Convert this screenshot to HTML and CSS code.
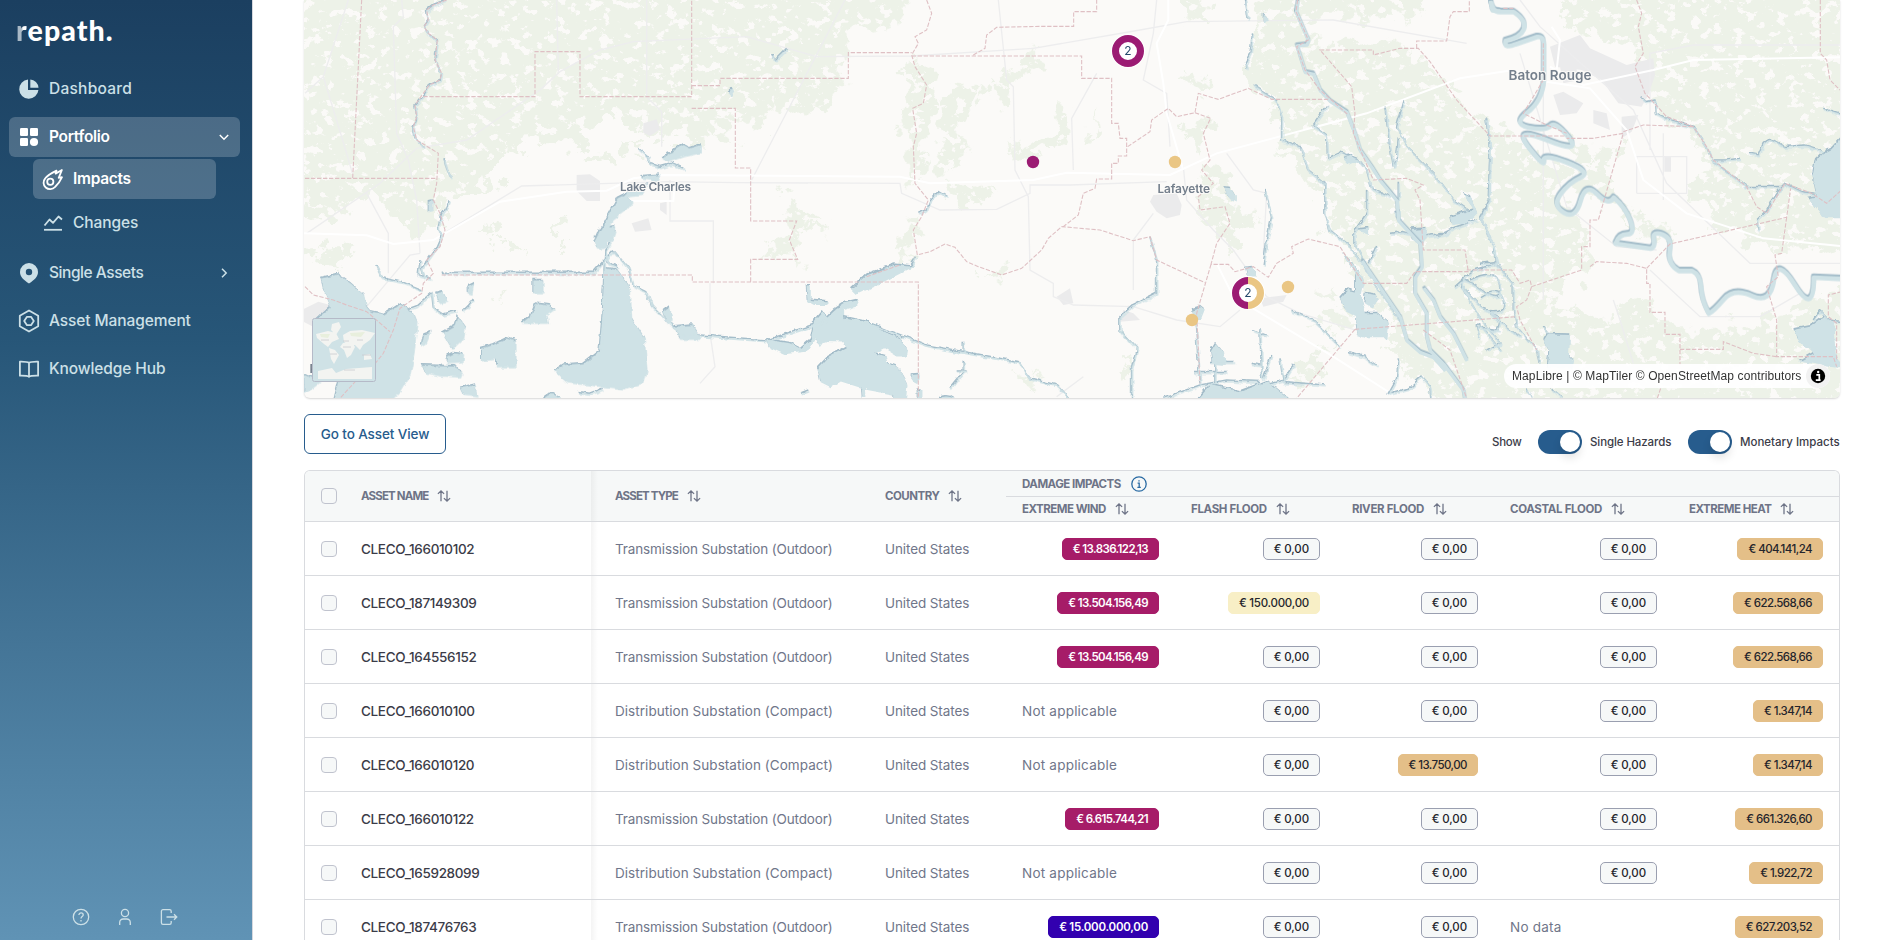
FILE: index.html
```html
<!DOCTYPE html>
<html lang="en">
<head>
<meta charset="utf-8">
<title>repath. – Portfolio Impacts</title>
<link rel="stylesheet" href="styles.css">
</head>
<body>
<svg width="0" height="0" class="defs">
  <symbol id="sort" viewBox="0 0 14 12"><path d="M4 11.2V1M.9 3.9 4 .9l3.1 3M10 .8V11M6.9 8.1l3.1 3 3.1-3" fill="none" stroke="currentColor" stroke-width="1.3"/></symbol>
</svg>
<div class="app">
<aside class="sidebar">
  <div class="logo"><span class="logo-r">r</span>epath.</div>
  <nav class="nav">
    <a class="item"><svg class="ico" viewBox="0 0 20 20"><path d="M9 .6V11h10.4A9.6 9.6 0 1 1 9 .6Z" fill="currentColor"/><path d="M11.3.5a9 9 0 0 1 8.2 8.2h-8.2Z" fill="currentColor"/></svg><span class="loose">Dashboard</span></a>
    <a class="item on"><svg class="ico" viewBox="0 0 20 20" fill="currentColor"><rect x="1" y="1" width="8" height="8" rx="1.3"/><rect x="11" y="1" width="8" height="8" rx="1.3"/><rect x="1" y="11" width="8" height="8" rx="1.3"/><circle cx="15" cy="15" r="4.1"/></svg><span>Portfolio</span><svg class="chev" viewBox="0 0 10 10"><path d="m.8 3 4.2 4.2L9.200 3"/></svg></a>
    <a class="item sub on first"><svg class="ico line" viewBox="0 0 20 20"><path d="M18.900 1 12.600 4.600 13.500 1.600C9 3.800 4.500 6.500 2.200 9.300A6.500 6.500 0 0 0 12 18c3-2.500 5.300-6 7-9.800l-3.300.7Z"/><circle cx="7.300" cy="12.700" r="3.100"/></svg><span>Impacts</span></a>
    <a class="item sub"><svg class="ico line" viewBox="0 0 20 20"><path d="M1.500 12.500 6.500 6.500l3.500 3.300L15.500 3.500l3.500 3"/><path d="M1 16.800h18"/></svg><span>Changes</span></a>
    <a class="item after"><svg class="ico" viewBox="0 0 20 20"><path fill="currentColor" fill-rule="evenodd" d="M10 0a9 9 0 0 1 9 9c0 4.600-3.500 8-9 11.500C4.500 17 1 13.600 1 9a9 9 0 0 1 9-9Zm0 5.800a3.200 3.200 0 1 0 0 6.400 3.200 3.200 0 0 0 0-6.400Z"/></svg><span class="snug">Single Assets</span><svg class="chev" viewBox="0 0 10 10"><path d="M3 .8 7.200 5 3 9.200"/></svg></a>
    <a class="item"><svg class="ico line" viewBox="0 0 20 20"><path d="m10-.5 9.200 5.200v10.600L10 20.500.8 15.300V4.700Z"/><path d="m8 5.800h4l2.800 4.200-2.800 4.200H8L5.200 10Z" stroke-linejoin="round"/></svg><span>Asset Management</span></a>
    <a class="item"><svg class="ico line" viewBox="0 0 20 20"><path d="M10 4C8.500 2.700 6 2.600.9 2.700v14C6 16.600 8.500 16.600 10 17.800c1.500-1.200 4-1.200 9.100-1.100v-14C14 2.600 11.500 2.700 10 4Zm0 0v13.500"/></svg><span>Knowledge Hub</span></a>
  </nav>
  <div class="foot">
    <svg viewBox="0 0 18 18"><circle cx="9" cy="9" r="7.700"/><path d="M6.900 7.100c0-3 4.300-2.800 4.300-.2 0 1.600-2.200 1.700-2.200 3.500M9 12v1.400"/></svg>
    <svg viewBox="0 0 18 18"><circle cx="9" cy="5" r="3.600"/><path d="M3.700 17v-2.500a3.500 3.500 0 0 1 3.500-3.500h3.600a3.500 3.500 0 0 1 3.500 3.500V17"/></svg>
    <svg viewBox="0 0 18 18"><path d="M11.200 5V3.300c0-1-.6-1.600-1.600-1.600H3C2 1.700 1.400 2.300 1.400 3.300v11.400c0 1 .6 1.600 1.600 1.600h6.600c1 0 1.600-.6 1.600-1.600V13M6.500 9h10.300M14 6.200 16.800 9 14 11.800"/></svg>
  </div>
</aside>
<main class="main">
<section class="map">
<svg class="canvas" viewBox="304 0 1536 398" width="1536" height="398">
<defs>
  <filter id="woods" x="304" y="0" width="1536" height="400" filterUnits="userSpaceOnUse" color-interpolation-filters="sRGB">
    <feTurbulence type="fractalNoise" baseFrequency=".05" numOctaves="5" seed="8" result="n"/>
    <feDisplacementMap in="SourceGraphic" in2="n" scale="44" xChannelSelector="R" yChannelSelector="G" result="d"/>
    <feTurbulence type="fractalNoise" baseFrequency=".09 .11" numOctaves="5" seed="21"/>
    <feColorMatrix values="0 0 0 0 1  0 0 0 0 1  0 0 0 0 1  20 0 0 0 -7.300" result="m"/>
    <feComposite in="d" in2="m" operator="in"/>
  </filter>
  <filter id="rough" x="304" y="0" width="1536" height="400" filterUnits="userSpaceOnUse">
    <feTurbulence type="fractalNoise" baseFrequency=".12" numOctaves="3" seed="3" result="n"/>
    <feDisplacementMap in="SourceGraphic" in2="n" scale="5" xChannelSelector="R" yChannelSelector="G"/>
  </filter>
  <g id="lakes">
    <g transform="scale(.33333)">
      <g transform="translate(900)">
        <path d="M60 830 110 818 150 845 190 880 197 915 210 930 250 938 300 905 340 935 350 960 342 1050 330 1120 300 1170 270 1200H100L120 1120 60 1140 10 1120V1180L90 1120 40 960 90 915 70 870Z"/>
        <path d="M912 800 950 805 990 860 994 950 1032 1010 1040 1110 1030 1145 970 1163 890 1155 800 1145 760 1110 790 1090 850 1085 895 1050 905 940Z"/>
        <path d="M697 836h31v42h-31zM705 907 745 912 763 925 740 940 745 967H663L690 945ZM500 855l20-10-5 35-15-5ZM405 875l20-5 15 30-25 5ZM425 995 460 975 470 945 495 980 490 1010 455 1045ZM440 1065 460 1055 490 1058 488 1085 440 1088ZM365 1092 460 1095 488 1110 480 1128 420 1125 375 1115ZM540 1040 580 1030 620 1010 647 1020V1097H585V1075L540 1080ZM370 1000l22-8-15 35-15 8ZM480 1160l45-10 5 35-40-5ZM725 1195q30-35 58 0ZM1088 930l20-15 8 45-15 8ZM1120 975l55-5 25 35v10h-65ZM383 600l15-3v30l-15 5ZM950 590l30-15 15 30-20 25-40 30-25 45v35l-20 5-10-20 15-35 15-25ZM883 710l30-2 5 30-15 5ZM905 680l38-5-2 45-40 5ZM1100 455l15-5 30-20 20 10 35-10v25l-50 12-45 15-20-5ZM985 560l60-10-20 30-50 5ZM1020 525l60-5-10 20-40-5Z"/>
      </g>
      <g transform="translate(2100)">
        <path d="M450 865 500 820 580 790 630 795 650 765 640 795 590 820 520 855 465 880ZM317 855h13v40l50 5v10h-40l-20-10ZM200 1015 270 1025 300 1040 330 1015 340 960 365 930 380 945 400 925 430 905 475 895 465 915 430 925 430 950 500 962 560 995 600 1010 620 1040 615 1065 590 1065 550 1040 520 1055 555 1065 560 1085 590 1095 610 1130 620 1150 615 1200H580V1180L500 1165 420 1140 390 1160 360 1145 352 1100 380 1070 435 1040 425 1020 375 1018 360 1040 345 1010 320 1050 250 1058 210 1040ZM635 1120l20-2-5 30-15-8ZM480 1160h12l2 25-12 5ZM650 1165h12v30h-12ZM710 1195q28-20 55 0ZM80 275l15-15 5 10-10 15Z"/>
      </g>
      <g transform="translate(3300)">
        <path d="M370 558 390 560 405 585V600L385 590ZM435 800 455 797 467 825H440ZM275 925l25-8 12 10-10 25h-20ZM725 755 760 790 790 840 780 880 795 935 830 935 865 965 860 1010 800 1010 770 1000 765 945 735 930 718 890 740 865 765 870 765 820ZM795 875l30 5 10 20-20 18-25-15ZM728 470l20-10 25 20-25 10ZM765 685l40-5v20ZM880 630l20-5v35l-15-5ZM930 685l50-3-5 30-15 20-25-15ZM1050 645l70-20-35-50 25 10 20 50-30 30-45 5ZM285 1200 330 1150 420 1170 500 1140 570 1200ZM330 1050l15-25 25 30 5 35-40-5ZM485 37l20 20-20 5Z"/>
      </g>
      <g transform="translate(4440)">
        <path d="M190 1015 200 998 268 1000 265 1060 280 1075 275 1100H200L205 1050ZM940 985 990 975 1030 945 1060 960 1068 1060 1080 1100 1040 1095 955 1080 1000 1055 985 1040 950 1020ZM1025 455 1055 440 1100 390V650L1030 650 985 590 1008 585 996 520 1005 475Z"/>
      </g>
    </g>
  </g>
  <g id="creeks" fill="none" stroke="currentColor" stroke-linejoin="round">
    <g transform="scale(.33333)" stroke-width="5">
      <g transform="translate(900)"><path d="M440 0 400 15 380 30 385 60 372 80 385 100 412 120 405 180 425 220 420 240 388 255 375 280 345 315 350 350 340 380 345 410 370 440M432 475l8 30 14 30M445 600l-10 30-15 20-5 35 10 20-15 35-25 35-20 30 10 30M230 795l15 35 60 15 60 25M425 817H880L940 750l45 55 15 50 40 20 15 40 80 80 50 10M915 750l-5 120-5 150-10 45M310 932l40-15 45-40 5 45 30 20 40-10M490 932l15-15 15-20M360 780l-5 45 40 10M1015 445l30 25 5 20 30 10 35-10 35 15M838 1175l30 5 40-15M945 690l-10 30-20 30 10 40 30 10"/></g>
      <g transform="translate(2100)"><path d="M0 1005 200 1020 380 960M430 950 500 965 680 1035 955 1085 990 1135 1070 1155 1105 1195M790 1025v30M750 1165 790 1115V1085M770 1110h30M215 165l10 15 35-35M655 640l25-10 10-30 25-25 25 15M300 1180l25-10"/></g>
      <g transform="translate(3300)"><path d="M437 0 445 60M458 100 450 160 437 185 442 205M460 255 530 300 545 350V420L600 440 625 510 675 550V640L690 690 750 740 785 790 900 960M683 315 640 375 680 405 683 475 720 457 770 475 800 510 815 565 870 590M855 320 870 440 880 500M913 300 890 380 930 450 1000 520 1060 600 1120 640M1160 355 1170 450 1165 600 1145 650 1180 740 1187 790 1120 810 1065 860M495 570 515 650 500 720 490 795M150 710 170 780 170 880 100 915 60 950 60 990 110 1045 95 1100V1195M190 1195 300 1155 380 1140 480 1145M285 960 290 1020 300 1150M345 1040V1150M280 1115h100M330 1085h70M480 985l5 150M460 990l40 15M455 1090l25 5M515 1065l-25 70M580 1095l-30 45-70 20M540 1075l10 70M550 1145l125 10M575 930 640 960 720 1040M745 1055l50 15 35 25M895 1075l-5 60-25 45 60-15 40-35 25 30 5 60M800 570V640L765 690V730L830 860M830 735l-25 55M870 700l40-5 50 15 70-10 40-20 60-20M895 545V600M895 415 890 470 880 500M1085 860l60 60 55 35M1130 980l70 10M1110 840q80-40 90 20t-70 0-10 60 80 40M1140 1010q-30-70 20-10t40 50"/></g>
      <g transform="translate(4440)"><path d="M18 355 30 450 28 600 0 650 40 740 50 790 100 850 100 930 110 980 170 1050 178 1090M0 790 50 785M810 460l25 5 15-35 20-15 45 25 60-5 50 15M700 485l100 75H905L915 550 965 575 1005 580M905 560l-30 40-15 30-30 30 5 30M1030 325l25 10 25 8M485 290l15 15 25-5 5 40 40 20 70 20 40 60 15 40 45 0 40-5M0 890q60-40 70 10t-60 30M30 940l90 70M20 980l40 50-40 20M1000 960l20-30 30 30 35 5M190 980l12 15M140 1165l15 30M215 1165l35 30"/></g>
    </g>
  </g>
  <g id="rivers" fill="none" stroke="currentColor" stroke-linejoin="round">
    <g transform="scale(.33333)">
      <g transform="translate(4440)" stroke-width="14"><path d="M32 0Q35 35 60 33H100Q140 60 130 85T75 120Q70 145 105 130L170 108Q190 105 190 130V240Q185 300 140 335T145 380T210 375T265 410T200 418T145 440T190 480T260 485T300 530T240 580T250 635T300 600T350 580T400 590Q435 620 450 660T440 700T405 728L510 743Q525 740 520 715T545 700T568 750T595 810H635Q660 820 662 860T685 938Q700 930 730 895T815 885T880 838T945 855T1000 830L1085 834"/></g>
      <g transform="translate(3300)" stroke-width="10"><path d="M593 0 588 35 625 120 620 132 590 135 615 215 640 220 660 270 690 302 740 335 765 400 780 450 815 500 840 540 890 600 895 660 960 730 965 800 945 830 945 880 980 940 980 1010 990 1050 1030 1090 1090 1170 1095 1200M785 780 900 950 920 1020 960 1055 1000 1070 1035 1110M970 862 1000 900 1020 950 1060 1000 1100 1080M1170 0l5 30 25 0"/></g>
    </g>
  </g>
</defs>
<g filter="url(#woods)" class="woods"><g transform="scale(.33333)">
  <g transform="translate(900 0)">
    <path d="M-150-150H1250V400L1080 420 960 340 860 400 880 440 720 420 600 470 600 540 470 590 440 660 420 600 400 700 330 700 200 560 150 640-100 680Z"/>
    <path d="M10 745l110-10 10 60-50-25-60 20ZM560 670l50 10-10 35-25-5ZM615 705l50 40-20 15-30-20ZM780 650l20 10-5 85-15-5ZM970 420h60v45h-50ZM860 470l50-10 20 30-60 5ZM590 880l30 5-20 15Z"/>
  </g>
  <g transform="translate(2100 0)">
    <path d="M-50-100H640L620 60 440 100 440 220 400 290 340 330 200 310 190 380 60 340 100 420-50 440ZM620 170l50 20 35 50-5 70-30 40-10 200-40-10-10-200 20-40ZM710 310l60-50 40 10-20 190-50 70-40-20 30-60ZM820 280l60-20 80-70 60-30 10 30-70 40-60 70-60 20ZM250 570l35 60 90 10-50 30 60 30-90-10-5 130-25-60-90 20 40-70 50-10ZM590 720l60-90v140l-50 15ZM730 560l140 20-30 40h-60ZM1070 310l40 10-10 120-100 40-60 10 10-40 110-40ZM950 410l30 80-30-10ZM820 800l70 10 20 30-80-20ZM930 1100l80 10 10 60-70-40ZM1150 400l30-60 10 60-30 60Z"/>
  </g>
  <g transform="translate(3300 0)">
    <path d="M450 80 540-100H1000L980 40 600 60 620 120 940 140 1040 240 1060 280 1170 380V1250H1100L900 1100 860 950 780 860 720 740 690 700 680 600 620 520 560 470 540 400 520 300 440 250ZM240 0h90l-20 80-70-30ZM220 210l120 50-40 20ZM260 350l70 20-20 90-50-30ZM310 500l60 20 40 90 80 40-70 40-20 80-50-80-60-40ZM60 1090l60 10-10 40-40 5ZM620 960l70-40 70 40-50 30ZM650 870h80v50ZM560 1150l60-90 80-30-30 60-60 90Z"/>
  </g>
  <g transform="translate(4440 0)">
    <path d="M200-100H1250V760L850 740 700 660 620 560 690 480 600 380 490 290 470 180 400 120 280 90ZM-20 370 130 400 160 480 290 500 230 600 330 680 320 800 200 900 380 960 480 880 520 940 600 1000 800 980 1000 900 1150 850V1250H-50ZM290 430l120 0-20 120 60 100 90 20 20 70-80-20-60-100-120-40Z"/>
  </g>
</g></g>
<g transform="scale(.33333)" class="urban">
  <path d="M905 930l50-25 35 10-5 40-45 25-40-20ZM1730 525l40-2 30 20v60h-40l-30-30ZM1895 670l50-15 10 35-50 5ZM1930 370l40-12 10 30-30 20-20-10ZM1980 610l20-5v40l-20-15ZM3460 585l70-5 15 35-5 30-40 10-30-20-20-30ZM3170 890l40-25 10 45-30 5ZM3370 930l30 10 20 20-60 5ZM3780 895l80-10-10 20-60 15ZM4650 140l90-35 30 40 110 50 80-20 5 50-20 60-20 35-70-10-50-70-60-30-80-10ZM4660 285l30-10 60 35-20 30-50 5ZM4780 330l40 10 10 50-50-20ZM4865 350l50-5-20 50-30 20ZM4993 470h20v45h-20ZM4680 200l40-20 20 60-50 10Z"/>
</g>
<g transform="scale(.33333)" class="roads">
  <path d="M1045 0 970 230 1040 460 1060 530M915 280 970 230M1205 0 1210 50 1180 80 1190 400 1225 480 1250 600 1260 760M920 700 1140 550 1250 445 1400 420 1620 270 1680 215 1800 150 1900 125 2240 110 2450 170 2735 168 3100 145 3420 90 3560 65 4000 60 4400 130M1100 580 1165 700 1165 820M1100 920 1230 765 1260 760M1340 695 1565 558 2000 545 2210 548 2700 550 2705 580 2820 630 2990 628 3090 580V555H3210L3500 545M1940 0V290L1985 335V440M1670 0 1675 215M2010 540V663H2140V850M2535 0 2255 540M2995 0 3020 240 3040 260 3045 510 3085 590 3090 810 3160 850V890L3220 915 3400 920 3530 960 3660 980 3720 930M3290 220 3215 355 3220 510M3470 0 3460 100 3430 240 3500 280 3510 440M3550 500 3560 600 3640 690 3700 750 3800 890 3900 940 4100 1000M3400 720 3460 640M3400 720V870M3680 460 3760 570 3800 580 3790 760M4560 0 4620 80 4900 330 5000 550 5250 790 5520 790M4560 160 4700 620 4850 740 4970 750M4630 130V900M4910 580H5060V470H4910V580M4990 600V400M4950 450V160L5080 135H5520M4840 900 4860 960 4900 1090M4950 810 5100 950 5280 950 5400 880M2130 850V1000L2145 1100 2100 1150M3170 1190 3250 1130"/>
</g>
<g transform="scale(.33333)" class="motorway">
  <path d="M912 700 1100 706 1180 732 1300 720 1500 605 1700 575 1820 572 1900 535 1990 525 2700 530 2790 550 3100 540 3200 518 3510 525 3650 460 4100 340 4380 235 4540 210 4640 245 4770 265 4880 390 4930 540 5060 640 5290 715 5520 738M3505 0V60L3470 130 3490 250 3500 340 3550 510M3650 790 3700 890 3850 980 4000 1070 4180 1185M4650 200 4750 255 4960 210 5080 180 5520 172M4655 80 4680 120 4670 210M1860 570 1885 603H2020L2023 560"/>
</g>
<g filter="url(#rough)">
  <g class="wd"><use href="#lakes"/><use href="#creeks"/></g>
  <g class="wl" transform="translate(.8 1.600)"><use href="#lakes"/><use href="#creeks"/></g>
</g>
<g class="wd" transform="translate(0 -1)"><use href="#rivers"/></g>
<g class="wl" transform="translate(.5 1)"><use href="#rivers"/></g>
<g transform="scale(.33333)" class="bounds">
  <path d="M1085 0 1058 535M915 535H1310M1270 290H1605V155H1740V290H2075V0M2075 257H2160V235H2545V158H2735M2075 325H2206V504H2252V663H2390L2368 720 2393 778H2252V846M1325 825H2077V846H2755V1195M1340 0 1300 15 1280 30 1285 60 1272 80 1285 100 1312 120 1305 180 1325 220 1320 240 1288 255 1245 315 1250 350 1240 380 1250 420 1315 460 1310 550 1300 600 1320 640 1335 690 1320 740 1280 780 1300 820 1270 850 1265 880 1200 925 1180 990 1150 1060 1110 1110 1070 1140 1020 1195M915 860 940 885 1000 900 1040 915 1100 935 1170 995"/>
  <path d="M2780 0 2795 40 2780 90 2745 110 2755 130 2735 165 2745 200 2780 255 2770 310 2738 325 2750 400 2740 440 2745 550 2785 600 2765 650 2740 690 2752 765 2790 755 2835 732 2865 742 2900 785 2935 800 3005 825 3065 805 3125 750 3145 715 3185 680 3300 690 3400 722 3450 710 3470 780 3615 848M2735 168H3245V235H3335V370H3355L3360 415H3380V468H3355V490H3335V537H3290L3285 565 3250 580 3235 645 3190 680M2920 165 2955 145 2960 105 2990 82 3120 79H3221V35H3290V0M2600 830 2700 795"/>
  <path d="M3383 440 3450 395 3455 360 3505 325 3530 350 3585 338 3595 280 3655 298 3745 265 3815 298H3985M3585 338 3632 355 3610 400 3630 480 3605 510 3640 550 3595 590 3600 630 3675 620 3690 670 3650 730 3633 793H3685L3705 815 3760 800 3805 832 3830 790 3880 760 3875 740 3925 717 4020 740 4090 850H4220L4245 815H4405L4395 750H4270L4260 600 4245 570 4270 555 4220 535 4120 540 4060 400 4065 340 4055 260 3960 150H4120V165L4200 145H4255L4290 185 4370 300 4470 408H4700M3893 0 3888 35 3925 120 3890 140 3915 210 3960 270 4000 305 4045 345M4250 145V123H4340L4350 50 4360 35H4408V0M3633 793 3590 940 3600 1150M4065 988 4550 950M4065 988 3890 1195M4270 990 4350 1050 4400 1195M4400 810H4535L4560 850 4590 840 4595 860 4745 810V740H4770V660H4795L4870 400 4780 415 4700 415M4595 860 4580 900 4550 920 4560 960 4610 1050"/>
  <path d="M4910 0 4925 40 4915 80 4930 160 4905 200 4935 280 5000 350 5080 380 5120 440 5140 480 5240 560 5270 620 5300 640 5330 590 5355 550 5435 580 5480 610 5525 570M4870 395 4930 375 5080 380M5461 0V160L5480 180 5490 240 5520 270M4940 805 5010 732 5360 652 5372 565M5360 652 5345 760 5325 765 5335 830 5300 860 5330 960V1070H5500L5510 1100M4770 800 4790 785 4880 790 4940 805V850H4950V937H4995V1003H5040V1095M5040 1048H5170V1025L5260 1060 5330 1070M5525 875 5485 885V950L5510 970V1080M4972 1195l10-30M4510 25H4540M4630 130V240L4570 340 4640 375 4700 400"/>
</g>
<g class="labels">
  <text x="309.500" y="373">P</text>
  <text x="620" y="190.500" textLength="71">Lake Charles</text>
  <text x="1157.500" y="193" textLength="52.500">Lafayette</text>
  <text x="1508.500" y="80" textLength="83" class="big">Baton Rouge</text>
</g>
<g class="pins">
  <circle cx="1033" cy="162" r="6.200" fill="#9b1b73"/>
  <g fill="#eac684"><circle cx="1175" cy="162" r="6.200"/><circle cx="1288" cy="287" r="6.200"/><circle cx="1192" cy="320" r="6.200"/></g>
  <circle cx="1128" cy="51" r="17" fill="#fff"/><circle cx="1128" cy="51" r="12.500" fill="none" stroke="#9b1b73" stroke-width="7"/>
  <circle cx="1248" cy="293" r="17" fill="#fff"/><path d="M1248 280.500a12.500 12.500 0 0 0 0 25" fill="none" stroke="#9b1b73" stroke-width="7"/><path d="M1248 280.500a12.500 12.500 0 0 1 0 25" fill="none" stroke="#eac684" stroke-width="7"/>
  <text x="1128" y="55">2</text><text x="1248" y="297">2</text>
</g>
<g transform="translate(312 318)">
  <rect x=".5" y=".5" width="63" height="63" rx="2" fill="#cfe2e6" stroke="#b5bac8"/>
  <g fill="#f3f4f1"><path d="M4 16 16 13 24 15 27 21 20 24 16 29 12 26 5 20ZM20 6l7-2 2 5-5 8-5-5ZM17 30l6 2 4 5-5 9-3-5ZM31 25l9-1 3 5-4 8-4 3-3-8-4-3ZM31 17l7-4 12-1 13 3-5 7-7 5-3 5-5-5-8-1-3-2ZM52 37l6-1 2 5-8 1ZM6 53 20 50 24 55 34 51 60 49V61H6Z"/></g>
  <g fill="#e8efdd"><path d="M8 16h10l-2 4-7-1ZM38 15l15-1-4 5-10-1Z"/></g>
  <path d="M9 22h8M31 23h6M45 22h6M31 29h8M18 36h7M50 37h9M32 52h11" stroke="#c9cbd0" stroke-width=".8"/>
</g>
</svg>
<div class="attrib"><span>MapLibre | © MapTiler © OpenStreetMap contributors</span><i><svg viewBox="0 0 24 24"><circle cx="12" cy="12" r="7.200"/><path d="M10.300 10.800h3v5M9.800 16.200h4.800" stroke="#fff" stroke-width="1.700"/><circle cx="12.200" cy="8" r="1.200" fill="#fff"/></svg></i></div>
</section>
<div class="bar">
  <button class="view">Go to Asset View</button>
  <div class="switches"><span class="l-show">Show</span><i class="sw"></i><span class="l-haz">Single Hazards</span><i class="sw"></i><span class="l-mon">Monetary Impacts</span></div>
</div>
<section class="table">
  <div class="head">
    <div class="c-name"><i class="box"></i><b class="tight">ASSET NAME</b><svg class="sort"><use href="#sort"/></svg></div>
    <div class="c-type"><b class="tight">ASSET TYPE</b><svg class="sort"><use href="#sort"/></svg></div>
    <div class="c-land"><b>COUNTRY</b><svg class="sort"><use href="#sort"/></svg></div>
    <div class="group">
      <div class="gtop"><b>DAMAGE IMPACTS</b><svg class="info" viewBox="0 0 16 16"><circle cx="8" cy="8" r="7.200"/><path d="M6.600 7.200h1.600v4M6.400 11.300h3.400M8 4.300v1.300"/></svg></div>
      <div class="gsub">
        <div><b>EXTREME WIND</b><svg class="sort"><use href="#sort"/></svg></div>
        <div><b class="open">FLASH FLOOD</b><svg class="sort"><use href="#sort"/></svg></div>
        <div><b class="open">RIVER FLOOD</b><svg class="sort"><use href="#sort"/></svg></div>
        <div><b class="open">COASTAL FLOOD</b><svg class="sort"><use href="#sort"/></svg></div>
        <div><b>EXTREME HEAT</b><svg class="sort"><use href="#sort"/></svg></div>
      </div>
    </div>
  </div>
  <div class="row"><div class="c-name"><i class="box"></i><span>CLECO_166010102</span></div><div class="c-type">Transmission Substation (Outdoor)</div><div class="c-land">United States</div><div class="v"><em class="high">€ 13.836.122,13</em></div><div class="v"><em>€ 0,00</em></div><div class="v"><em>€ 0,00</em></div><div class="v"><em>€ 0,00</em></div><div class="v"><em class="mid">€ 404.141,24</em></div></div>
  <div class="row"><div class="c-name"><i class="box"></i><span>CLECO_187149309</span></div><div class="c-type">Transmission Substation (Outdoor)</div><div class="c-land">United States</div><div class="v"><em class="high">€ 13.504.156,49</em></div><div class="v"><em class="low">€ 150.000,00</em></div><div class="v"><em>€ 0,00</em></div><div class="v"><em>€ 0,00</em></div><div class="v"><em class="mid">€ 622.568,66</em></div></div>
  <div class="row"><div class="c-name"><i class="box"></i><span>CLECO_164556152</span></div><div class="c-type">Transmission Substation (Outdoor)</div><div class="c-land">United States</div><div class="v"><em class="high">€ 13.504.156,49</em></div><div class="v"><em>€ 0,00</em></div><div class="v"><em>€ 0,00</em></div><div class="v"><em>€ 0,00</em></div><div class="v"><em class="mid">€ 622.568,66</em></div></div>
  <div class="row"><div class="c-name"><i class="box"></i><span>CLECO_166010100</span></div><div class="c-type dist">Distribution Substation (Compact)</div><div class="c-land">United States</div><div class="v na">Not applicable</div><div class="v"><em>€ 0,00</em></div><div class="v"><em>€ 0,00</em></div><div class="v"><em>€ 0,00</em></div><div class="v"><em class="mid">€ 1.347,14</em></div></div>
  <div class="row"><div class="c-name"><i class="box"></i><span>CLECO_166010120</span></div><div class="c-type dist">Distribution Substation (Compact)</div><div class="c-land">United States</div><div class="v na">Not applicable</div><div class="v"><em>€ 0,00</em></div><div class="v"><em class="mid">€ 13.750,00</em></div><div class="v"><em>€ 0,00</em></div><div class="v"><em class="mid">€ 1.347,14</em></div></div>
  <div class="row"><div class="c-name"><i class="box"></i><span>CLECO_166010122</span></div><div class="c-type">Transmission Substation (Outdoor)</div><div class="c-land">United States</div><div class="v"><em class="high">€ 6.615.744,21</em></div><div class="v"><em>€ 0,00</em></div><div class="v"><em>€ 0,00</em></div><div class="v"><em>€ 0,00</em></div><div class="v"><em class="mid">€ 661.326,60</em></div></div>
  <div class="row"><div class="c-name"><i class="box"></i><span>CLECO_165928099</span></div><div class="c-type dist">Distribution Substation (Compact)</div><div class="c-land">United States</div><div class="v na">Not applicable</div><div class="v"><em>€ 0,00</em></div><div class="v"><em>€ 0,00</em></div><div class="v"><em>€ 0,00</em></div><div class="v"><em class="mid">€ 1.922,72</em></div></div>
  <div class="row"><div class="c-name"><i class="box"></i><span>CLECO_187476763</span></div><div class="c-type">Transmission Substation (Outdoor)</div><div class="c-land">United States</div><div class="v"><em class="max">€ 15.000.000,00</em></div><div class="v"><em>€ 0,00</em></div><div class="v"><em>€ 0,00</em></div><div class="v na">No data</div><div class="v"><em class="mid">€ 627.203,52</em></div></div>
</section>
</main>
</div>
</body>
</html>
```
FILE: styles.css
```css
* { box-sizing: border-box; }
html, body { margin: 0; height: 100%; overflow: hidden; }
body { font-family: Inter, "Liberation Sans", sans-serif; background: #fff; color: #3b3c48; }
.defs { position: absolute; }
.app { display: flex; height: 940px; overflow: hidden; }

.sidebar { width: 253px; flex: none; display: flex; flex-direction: column; border-right: 1px solid #d6d8de; background: linear-gradient(#1b3f60, #275678 36%, #6093b5); color: #cce0e7; }
.logo { height: 69px; padding: 12px 0 0 16px; font: 900 28.500px/36px Lato, Inter, sans-serif; letter-spacing: 1.100px; color: #fff; }
.logo-r { background: linear-gradient(90deg, #a9b9c6 45%, #fff 60%); -webkit-background-clip: text; background-clip: text; color: transparent; }
.nav { display: flex; flex-direction: column; gap: 8px; padding: 0 12px 0 9px; }
.item { display: flex; align-items: center; height: 40px; border-radius: 6px; padding: 0 11px 0 10px; gap: 10px; font-size: 15.500px; font-weight: 500; letter-spacing: -.1px; }
.item span { padding-bottom: 1px; }
.item.on { background: rgba(255,255,255,.2); color: #fff; font-weight: 600; letter-spacing: -.3px; }
.item .loose { letter-spacing: .25px; }
.item .snug { letter-spacing: -.45px; }
.item.sub { margin: -4px 24px 0; }
.item.sub.first { margin-top: -6px; margin-bottom: 0; }
.item.sub.first + .sub { margin-top: -4px; }
.item.after { margin-top: 2px; }
.ico { width: 20px; height: 20px; overflow: visible; flex: none; }
.ico.line { fill: none; stroke: currentColor; stroke-width: 1.800; stroke-linejoin: round; }
.chev { width: 10px; height: 10px; margin-left: auto; fill: none; stroke: currentColor; stroke-width: 1.500; }
.foot { margin-top: auto; display: flex; gap: 26px; padding: 0 0 14px 72px; }
.foot svg { width: 18px; height: 18px; fill: none; stroke: #cce0e7; stroke-width: 1.300; }

.main { flex: 1; padding: 0 42px 0 51px; }
.map { position: relative; width: 1536px; height: 398px; border-radius: 0 0 6px 6px; overflow: hidden; background: #fbfaf8; box-shadow: 0 1px 2px rgba(0,0,0,.16); }
.canvas { display: block; }
.woods { fill: #edf2e8; }
.urban { fill: #ebebec; }
.roads { fill: none; stroke: #ededee; stroke-width: 4; }
.motorway { fill: none; stroke: #fff; stroke-width: 6; }
.wd { color: #a3bcc9; fill: #a3bcc9; }
.wl { color: #cfe2e6; fill: #cfe2e6; }
.bounds { fill: none; stroke: #dfc0c4; stroke-width: 3.300; stroke-dasharray: 13 5; }
.labels { font-size: 12px; font-weight: 600; fill: #747f8c; stroke: #fbfaf8; stroke-width: 2px; paint-order: stroke; }
.labels .big { font-size: 13.500px; }
.pins { font-size: 12px; text-anchor: middle; }
.pins text { fill: #24496a; }
.attrib { position: absolute; right: 10px; bottom: 10px; display: flex; height: 24px; width: 326px; border-radius: 12px; background: rgba(255,255,255,.93); font: 12px/24px "Liberation Sans", sans-serif; letter-spacing: .1px; color: #333; padding-left: 8px; justify-content: space-between; white-space: nowrap; }
.attrib i { width: 24px; height: 24px; border-radius: 50%; background: #f2f2f2; }
.attrib svg { display: block; }

.bar { display: flex; justify-content: space-between; align-items: flex-end; padding-top: 16px; height: 56px; }
.view { width: 142px; height: 40px; padding: 0; border: 1px solid #275c8d; border-radius: 6px; background: #fff; color: #275c8d; font: 500 13.500px Inter, sans-serif; letter-spacing: -.1px; white-space: nowrap; }
.switches { display: flex; align-items: center; height: 24px; font-size: 11.500px; font-weight: 500; color: #3b3c48; white-space: nowrap; }
.l-show { margin-right: 16px; width: 30px; letter-spacing: -.3px; }
.l-haz { margin: 0 16px 0 8px; width: 82px; letter-spacing: -.1px; }
.l-mon { margin-left: 8px; width: 100px; }
.sw { width: 44px; height: 24px; border-radius: 12px; background: #275c8d; padding: 2px; display: flex; justify-content: flex-end; }
.sw::after { content: ""; width: 20px; height: 20px; border-radius: 50%; background: #fff; box-shadow: 0 6px 10px rgba(0,0,0,.12); }

.table { width: 1536px; height: 500px; margin-top: 16px; border: 1px solid #d9dbdf; border-bottom: 0; border-radius: 6px 6px 0 0; overflow: hidden; }
.head, .row { display: grid; grid-template-columns: 286px 278px 137px 169px 161px 158px 179px 166px; border-bottom: 1px solid #d9dbdf; }
.head { height: 51px; background: #f6f8f8; color: #6e7487; }
.row { height: 54px; font-size: 13.500px; color: #70768a; letter-spacing: -.1px; }
.head > div, .row > div { display: flex; align-items: center; white-space: nowrap; }
.head b { font-size: 11.500px; font-weight: 700; letter-spacing: -.5px; }
.head .tight { letter-spacing: -.85px; }
.head .open { letter-spacing: -.33px; }
.c-name { padding-left: 16px; }
.c-name .box { margin-right: 24px; }
.c-name span { color: #3b3c48; font-weight: 500; letter-spacing: -.35px; }
.c-type { padding-left: 24px; background: linear-gradient(90deg, rgba(0,0,0,.045), transparent 7px); }
.row .c-type { letter-spacing: -.13px; }
.row .dist { letter-spacing: .05px; }
.c-land { padding-left: 16px; }
.box { width: 16px; height: 16px; border: 1px solid #c0c3ce; border-radius: 4px; background: #f6f8f8; }
.sort { width: 14px; height: 12px; margin-left: 9px; flex: none; }
.head > .group { grid-column: 4 / 9; display: grid; grid-template-rows: 26px 24px; align-items: stretch; }
.gtop { display: flex; align-items: center; padding-left: 16px; border-bottom: 1px solid #d9dbdf; }
.info { width: 16px; height: 16px; margin-left: 10px; fill: none; stroke: #2a6ba3; stroke-width: 1.300; }
.gsub { display: grid; grid-template-columns: 169px 161px 158px 179px 166px; }
.gsub div { display: flex; align-items: center; padding-left: 16px; }
.row > .v { justify-content: flex-end; padding: 0 16px; }
.row > .na { justify-content: flex-start; letter-spacing: .22px; }
.row em { display: flex; align-items: center; height: 22px; padding: 0 10px; border: 1px solid #9a9fb0; border-radius: 5px; background: #f6f8f8; color: #24252c; font: 500 11.500px Inter, sans-serif; letter-spacing: -.1px; }
.row em.high { background: #a61c68; border-color: #a61c68; color: #fff; font-weight: 600; letter-spacing: -.6px; }
.row em.max { background: #3200af; border-color: #3200af; color: #fff; font-weight: 600; letter-spacing: -.25px; }
.row em.mid { background: #e4bf88; border-color: #e4bf88; letter-spacing: -.55px; }
.row em.low { background: #f8efc6; border-color: #f8efc6; letter-spacing: -.25px; }
```
